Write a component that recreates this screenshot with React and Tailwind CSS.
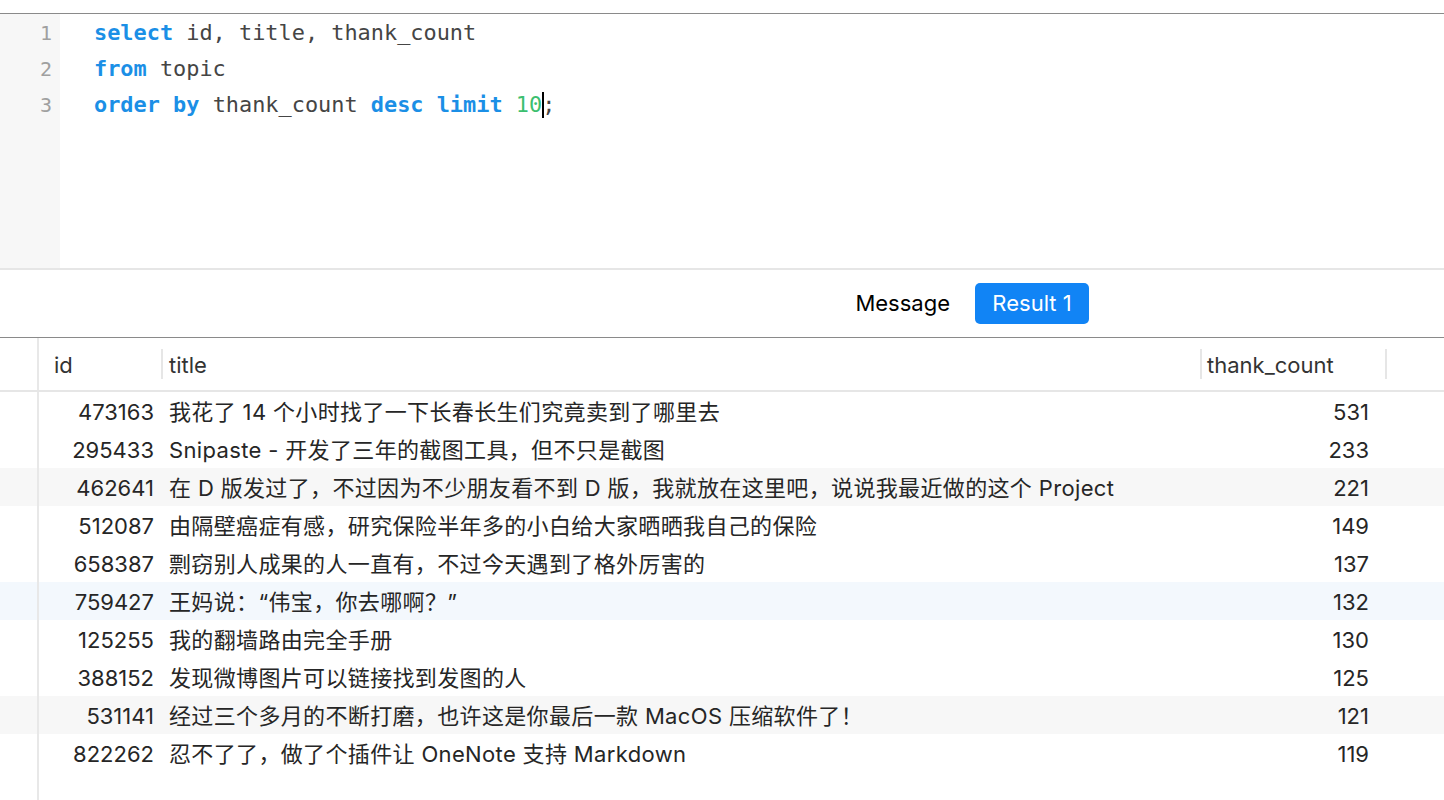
import React from 'react';

const rows = [
    {id: 473163, title: '我花了 14 个小时找了一下长春长生们究竟卖到了哪里去', count: 531},
    {id: 295433, title: 'Snipaste - 开发了三年的截图工具，但不只是截图', count: 233},
    {id: 462641, title: '在 D 版发过了，不过因为不少朋友看不到 D 版，我就放在这里吧，说说我最近做的这个 Project', count: 221, bg: 'bg-[#f7f7f7]'},
    {id: 512087, title: '由隔壁癌症有感，研究保险半年多的小白给大家晒晒我自己的保险', count: 149},
    {id: 658387, title: '剽窃别人成果的人一直有，不过今天遇到了格外厉害的', count: 137},
    {id: 759427, title: '王妈说：“伟宝，你去哪啊？”', count: 132, bg: 'bg-[#f3f8fd]'},
    {id: 125255, title: '我的翻墙路由完全手册', count: 130},
    {id: 388152, title: '发现微博图片可以链接找到发图的人', count: 125},
    {id: 531141, title: '经过三个多月的不断打磨，也许这是你最后一款 MacOS 压缩软件了！', count: 121, bg: 'bg-[#f7f7f7]'},
    {id: 822262, title: '忍不了了，做了个插件让 OneNote 支持 Markdown', count: 119},
];

const Kw = ({children}) => <span className="font-bold text-[#1b8fe6]">{children}</span>;
const Id = ({children}) => <span className="text-[#454545]">{children}</span>;

const Table = () => (
    <div>
        {/* Header */}
        <div className="flex h-[52px] border-b-2 border-[#e6e6e6] box-content items-center text-[22px] text-[#333]">
            <div className="w-[37px] self-stretch border-r-2 border-[#e8e8e8] box-content" />
            <div className="w-[122px] pl-[15px] pt-[2px]">id</div>
            <div className="w-[2px] h-[30px] bg-[#e6e6e6]" />
            <div className="w-[1037px] pl-[6px] pt-[2px]">title</div>
            <div className="w-[2px] h-[30px] bg-[#e6e6e6]" />
            <div className="w-[183px] pl-[5px] pt-[2px]">thank_count</div>
            <div className="w-[2px] h-[30px] bg-[#e6e6e6]" />
        </div>
        {/* Rows */}
        {rows.map((r) => (
            <div key={r.id} className={`flex h-[38px] items-center text-[22px] ${r.bg || ''}`}>
                <div className="w-[37px] self-stretch border-r-2 border-[#e8e8e8] box-content" />
                <div className="w-[122px] text-right pr-[7px] pt-[2px]">{r.id}</div>
                <div className="w-[1039px] pl-[8px] pt-[2px] whitespace-nowrap tracking-[0.35px]">{r.title}</div>
                <div className="w-[185px] text-right pr-[16px] pt-[2px]">{r.count}</div>
            </div>
        ))}
        <div className="flex h-[40px]">
            <div className="w-[37px] border-r-2 border-[#e8e8e8] box-content" />
        </div>
    </div>
);

const Page = () => {
    return (
        <div className="w-[1444px] h-[800px] overflow-hidden bg-white text-[#262626] font-['Inter','Noto_Sans_CJK_SC',sans-serif]">
            <div className="h-[13px] border-b border-[#8a8a8a] box-content" />

            {/* Editor */}
            <div className="flex h-[254px] border-b-2 border-[#e6e6e6] box-content">
                <div className="w-[60px] bg-[#f7f7f7] pr-2 pt-[1px] text-right font-['DejaVu_Sans_Mono',monospace] text-[20px] leading-[36px] text-[#a0a0a0]">
                    <div>1</div>
                    <div>2</div>
                    <div>3</div>
                </div>
                <div className="pl-[34px] pt-[1px] font-['DejaVu_Sans_Mono',monospace] text-[21.9px] leading-[36px] whitespace-pre">
                    <div><Kw>select</Kw> <Id>id, title, thank_count</Id></div>
                    <div><Kw>from</Kw> <Id>topic</Id></div>
                    <div><Kw>order by</Kw> <Id>thank_count</Id> <Kw>desc limit</Kw> <span className="text-[#3cbf6f]">10</span><span className="inline-block w-[2px] h-[26px] bg-black align-[-6px] -mr-[2px]" /><Id>;</Id></div>
                </div>
            </div>

            {/* Tabs */}
            <div className="flex h-[67px] items-center justify-end pr-[355px] border-b border-[#8a8a8a] box-content">
                <span className="text-[22px] text-black mr-[25px]">Message</span>
                <span className="h-[41px] w-[114px] flex items-center justify-center rounded-[5px] bg-[#1184f5] text-white text-[22px]">Result 1</span>
            </div>

            <Table />
        </div>
    );
};

export default Page;
